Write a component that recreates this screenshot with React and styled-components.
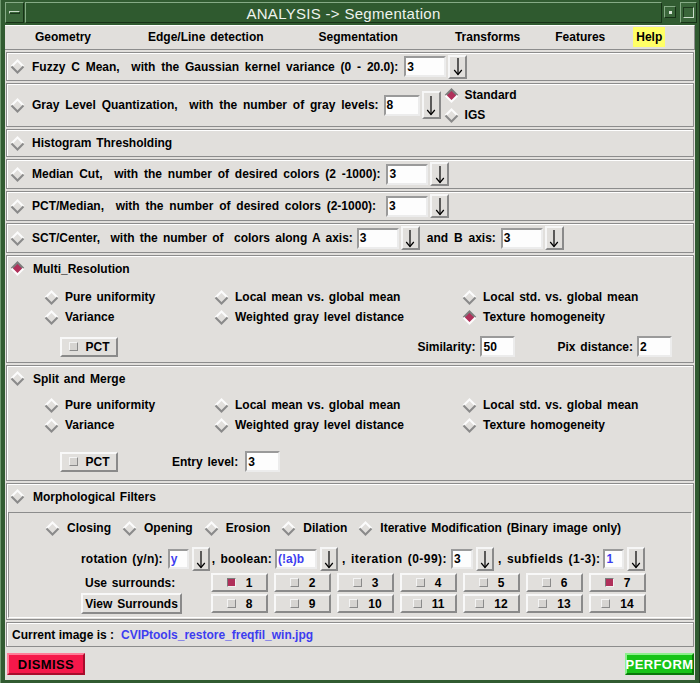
import React from 'react';
import styled, { createGlobalStyle } from 'styled-components';

const BG = '#e1dfdc';
const DARK = '#8c8c8c';
const LIGHT = '#ffffff';
const CRIMSON = '#b0305a';
const BLUE = '#3d3df0';

const GlobalStyle = createGlobalStyle`
  html, body { margin: 0; padding: 0; background: #2c512c; }
  body { font-family: "Liberation Sans", Arial, sans-serif; }
  * { box-sizing: border-box; }
`;

const Win = styled.div`
  width: 700px;
  height: 683px;
  background: #315b31;
  display: flex;
  flex-direction: column;
  padding-bottom: 3px;
  border-left: 1px solid #6f996f;
  border-right: 1px solid #1d381d;
  overflow: hidden;
`;

const TitleBar = styled.div`
  height: 25px;
  flex-shrink: 0;
  display: flex;
  align-items: stretch;
  padding: 2px 2px 2px 4px;
  gap: 1px;
`;

const TitleBtn = styled.div`
  width: ${p => p.$w}px;
  ${p => p.$small ? 'margin: 4px 3px 5px 1px;' : ''}
  border: 1px solid;
  border-color: #86ab86 #173217 #173217 #86ab86;
  background: #3a663a;
  display: flex;
  align-items: center;
  justify-content: center;
`;

const MenuGlyph = styled.div`
  width: 11px;
  height: 3px;
  border: 1px solid;
  border-color: #c9dcc9 #1c381c #1c381c #c9dcc9;
`;

const DotGlyph = styled.div`
  width: 3px;
  height: 3px;
  background: #d9e6d9;
`;

const SquareGlyph = styled.div`
  width: 11px;
  height: 11px;
  border: 1px solid;
  border-color: #1c381c #c9dcc9 #c9dcc9 #1c381c;
`;

const TitleText = styled.div`
  flex: 1;
  display: flex;
  align-items: center;
  justify-content: center;
  color: #eef3ee;
  font-size: 15px;
  letter-spacing: 0.3px;
  font-family: "Liberation Sans", Arial, sans-serif;
  background: #2f5a2f;
  border: 1px solid;
  border-color: #86ab86 #173217 #173217 #86ab86;
  padding-top: 1px;
`;

const Body = styled.div`
  flex: 1;
  margin: 0 4px;
  background: ${BG};
  display: flex;
  flex-direction: column;
  font-weight: bold;
  font-size: 12px;
  word-spacing: 1.5px;
  color: #000;
`;

const MenuBar = styled.div`
  height: 25px;
  flex-shrink: 0;
  display: flex;
  align-items: stretch;
  border-top: 1px solid ${LIGHT};
  border-bottom: 1px solid ${DARK};
  border-right: 1px solid ${DARK};
  padding: 1px 0 2px 0;
`;

const MenuItem = styled.div`
  margin-left: ${p => p.$ml}px;
  padding: 0 3px;
  display: flex;
  align-items: center;
  background: ${p => (p.$hl ? '#ffff66' : 'transparent')};
`;

const Row = styled.div`
  flex-shrink: 0;
  height: ${p => p.$h}px;
  margin: 2px 1px 0;
  border: 1px solid ${DARK};
  box-shadow: inset 1px 1px 0 ${LIGHT};
  display: flex;
  align-items: center;
  padding-left: 3px;
`;

const Section = styled.div`
  flex-shrink: 0;
  height: ${p => p.$h}px;
  margin: 2px 1px 0;
  border: 1px solid ${DARK};
  box-shadow: inset 1px 1px 0 ${LIGHT};
  display: flex;
  flex-direction: column;
`;

const SectionHead = styled.div`
  height: 25px;
  display: flex;
  align-items: center;
  padding-left: 3px;
  flex-shrink: 0;
`;

const Label = styled.span`
  white-space: pre;
  margin-left: ${p => p.$ml ?? 0}px;
  margin-right: ${p => p.$mr ?? 0}px;
  word-spacing: ${p => p.$ws ?? 1.5}px;
  letter-spacing: ${p => p.$ls ?? 0}px;
  color: ${p => (p.$blue ? BLUE : 'inherit')};
`;

const Entry = styled.div`
  width: ${p => p.$w}px;
  height: ${p => p.$hh ?? 21}px;
  margin-left: ${p => p.$ml ?? 0}px;
  background: #fdfdfd;
  border: 2px solid;
  border-color: #9a9a9a #ececec #ececec #9a9a9a;
  display: flex;
  align-items: center;
  padding-left: 1px;
  color: ${p => (p.$blue ? BLUE : '#000')};
  font-weight: bold;
`;

const ArrowBtn = styled.div`
  width: ${p => p.$w ?? 19}px;
  height: ${p => p.$hh ?? 24}px;
  margin-left: ${p => p.$ml ?? 2}px;
  border: 2px solid;
  border-color: #f6f6f6 #8a8a8a #8a8a8a #f6f6f6;
  background: ${BG};
  display: flex;
  align-items: center;
  justify-content: center;
`;

const Arrow = ({ h = 19 }) => (
  <svg width="10" height={h} viewBox={`0 0 10 ${h}`}>
    <line x1="5" y1="1" x2="5" y2={h - 1.5} stroke="#000" strokeWidth="1.2" />
    <polyline points={`1.2,${h - 6} 5,${h - 1.5} 8.8,${h - 6}`} fill="none" stroke="#000" strokeWidth="1.2" />
  </svg>
);

const DiamondSvg = styled.svg`
  flex-shrink: 0;
  display: block;
`;

const Diamond = ({ on }) => (
  <DiamondSvg width="15" height="15" viewBox="0 0 15 15">
    {on && <polygon points="7.5,1.5 13.5,7.5 7.5,13.5 1.5,7.5" fill={CRIMSON} />}
    <polyline points="1.5,7.5 7.5,1.5 13.5,7.5" fill="none" stroke={on ? '#7c7c7c' : '#fcfcfc'} strokeWidth="2" />
    <polyline points="1.5,7.5 7.5,13.5 13.5,7.5" fill="none" stroke={on ? '#fcfcfc' : '#8a8a8a'} strokeWidth="2" />
  </DiamondSvg>
);

const Opt = styled.div`
  display: flex;
  align-items: center;
  gap: ${p => p.$gap ?? 6}px;
  height: ${p => p.$h ?? 20}px;
`;

const RadioOpt = ({ on, children, gap, h }) => (
  <Opt $gap={gap} $h={h}>
    <Diamond on={on} />
    <Label>{children}</Label>
  </Opt>
);

const RadioStack = styled.div`
  display: flex;
  flex-direction: column;
  margin-left: 3px;
`;

const OptGrid = styled.div`
  display: grid;
  grid-template-columns: 170px 248px auto;
  grid-auto-rows: 20px;
  padding-left: 37px;
  margin-top: ${p => p.$mt}px;
`;

const ActionLine = styled.div`
  display: flex;
  align-items: center;
  height: 21px;
  margin-top: ${p => p.$mt}px;
  padding-left: 53px;
  padding-right: 21px;
`;

const Push = styled.div`
  flex: 1;
`;

const Btn = styled.div`
  width: ${p => p.$w}px;
  height: ${p => p.$hh ?? 20}px;
  border: 2px solid;
  border-color: #f8f8f8 #8a8a8a #8a8a8a #f8f8f8;
  background: ${BG};
  display: flex;
  align-items: center;
  justify-content: center;
  gap: ${p => p.$gap ?? 8}px;
  white-space: pre;
`;

const Check = styled.span`
  width: 9px;
  height: 9px;
  display: inline-block;
  border: 1px solid;
  border-color: ${p => (p.$on ? '#7a7a7a #f0f0f0 #f0f0f0 #7a7a7a' : '#f4f4f4 #8a8a8a #8a8a8a #f4f4f4')};
  background: ${p => (p.$on ? CRIMSON : '#d6d4d1')};
`;

const Inner = styled.div`
  margin: 3px 1px 0 1px;
  height: 106px;
  border: 1px solid;
  border-color: ${DARK} ${LIGHT} ${LIGHT} ${DARK};
  display: flex;
  flex-direction: column;
`;

const RadioLine = styled.div`
  display: flex;
  align-items: center;
  gap: 11px;
  height: 20px;
  margin-top: 5px;
  padding-left: 36px;
`;

const ParamLine = styled.div`
  display: flex;
  align-items: center;
  height: 24px;
  margin-top: 9px;
  padding-left: 72px;
`;

const SurroundGrid = styled.div`
  display: grid;
  grid-template-columns: 124px repeat(7, 57px);
  grid-auto-rows: 19px;
  column-gap: 6px;
  row-gap: 2px;
  margin-top: 2px;
  padding-left: 72px;
  align-items: center;
`;

const GridLabel = styled.span`
  padding-left: 4px;
`;

const BottomBar = styled.div`
  flex: 1;
  display: flex;
  align-items: flex-start;
  justify-content: space-between;
  padding: 6px 1px 0 2px;
`;

const BigBtn = styled.div`
  width: ${p => p.$w}px;
  height: 22px;
  background: ${p => p.$bg};
  color: ${p => p.$fg};
  border: 2px solid;
  border-color: ${p => p.$hi} ${p => p.$lo} ${p => p.$lo} ${p => p.$hi};
  display: flex;
  align-items: center;
  justify-content: center;
  font-size: 13px;
  letter-spacing: 0.4px;
`;

const surr1 = [1, 2, 3, 4, 5, 6, 7];
const surr2 = [8, 9, 10, 11, 12, 13, 14];

export default function App() {
  return (
    <>
      <GlobalStyle />
      <Win>
        <TitleBar>
          <TitleBtn $w={19}><MenuGlyph /></TitleBtn>
          <TitleText>ANALYSIS -&gt; Segmentation</TitleText>
          <TitleBtn $w={12} $small><DotGlyph /></TitleBtn>
          <TitleBtn $w={17}><SquareGlyph /></TitleBtn>
        </TitleBar>
        <Body>
          <MenuBar>
            <MenuItem $ml={27}>Geometry</MenuItem>
            <MenuItem $ml={51}>Edge/Line detection</MenuItem>
            <MenuItem $ml={49}>Segmentation</MenuItem>
            <MenuItem $ml={51}>Transforms</MenuItem>
            <MenuItem $ml={29}>Features</MenuItem>
            <MenuItem $ml={25} $hl>Help</MenuItem>
          </MenuBar>

          <Row $h={29}>
            <Diamond />
            <Label $ml={7} $mr={6} $ws={2.5}>Fuzzy C Mean,  with the Gaussian kernel variance (0 - 20.0):</Label>
            <Entry $w={42}>3</Entry>
            <ArrowBtn><Arrow /></ArrowBtn>
          </Row>

          <Row $h={44}>
            <Diamond />
            <Label $ml={7} $mr={5} $ws={2.5}>Gray Level Quantization,  with the number of gray levels:</Label>
            <Entry $w={36}>8</Entry>
            <ArrowBtn $hh={28}><Arrow h={21} /></ArrowBtn>
            <RadioStack>
              <RadioOpt on>Standard</RadioOpt>
              <RadioOpt>IGS</RadioOpt>
            </RadioStack>
          </Row>

          <Row $h={28}>
            <Diamond />
            <Label $ml={7}>Histogram Thresholding</Label>
          </Row>

          <Row $h={30}>
            <Diamond />
            <Label $ml={7} $mr={6} $ws={2.5}>Median Cut,  with the number of desired colors (2 -1000):</Label>
            <Entry $w={42}>3</Entry>
            <ArrowBtn><Arrow /></ArrowBtn>
          </Row>

          <Row $h={30}>
            <Diamond />
            <Label $ml={7} $mr={10} $ws={2.5}>PCT/Median,  with the number of desired colors (2-1000):</Label>
            <Entry $w={42}>3</Entry>
            <ArrowBtn><Arrow /></ArrowBtn>
          </Row>

          <Row $h={30}>
            <Diamond />
            <Label $ml={7} $mr={4} $ws={1.9}>SCT/Center,  with the number of  colors along A axis:</Label>
            <Entry $w={42}>3</Entry>
            <ArrowBtn><Arrow /></ArrowBtn>
            <Label $ml={7} $mr={5} $ws={2.5}>and B axis:</Label>
            <Entry $w={42}>3</Entry>
            <ArrowBtn><Arrow /></ArrowBtn>
          </Row>

          <Section $h={108}>
            <SectionHead>
              <Diamond on />
              <Label $ml={8}>Multi_Resolution</Label>
            </SectionHead>
            <OptGrid $mt={6}>
              <RadioOpt>Pure uniformity</RadioOpt>
              <RadioOpt>Local mean vs. global mean</RadioOpt>
              <RadioOpt>Local std. vs. global mean</RadioOpt>
              <RadioOpt>Variance</RadioOpt>
              <RadioOpt>Weighted gray level distance</RadioOpt>
              <RadioOpt on>Texture homogeneity</RadioOpt>
            </OptGrid>
            <ActionLine $mt={9}>
              <Btn $w={58}><Check />PCT</Btn>
              <Push />
              <Label $mr={5}>Similarity:</Label>
              <Entry $w={35}>50</Entry>
              <Label $ml={42} $mr={4}>Pix distance:</Label>
              <Entry $w={35}>2</Entry>
            </ActionLine>
          </Section>

          <Section $h={116}>
            <SectionHead>
              <Diamond />
              <Label $ml={8}>Split and Merge</Label>
            </SectionHead>
            <OptGrid $mt={4}>
              <RadioOpt>Pure uniformity</RadioOpt>
              <RadioOpt>Local mean vs. global mean</RadioOpt>
              <RadioOpt>Local std. vs. global mean</RadioOpt>
              <RadioOpt>Variance</RadioOpt>
              <RadioOpt>Weighted gray level distance</RadioOpt>
              <RadioOpt>Texture homogeneity</RadioOpt>
            </OptGrid>
            <ActionLine $mt={16}>
              <Btn $w={58}><Check />PCT</Btn>
              <Label $ml={54} $mr={7}>Entry level:</Label>
              <Entry $w={35}>3</Entry>
            </ActionLine>
          </Section>

          <Section $h={137}>
            <SectionHead>
              <Diamond />
              <Label $ml={8}>Morphological Filters</Label>
            </SectionHead>
            <Inner>
              <RadioLine>
                <RadioOpt gap={7}>Closing</RadioOpt>
                <RadioOpt gap={7}>Opening</RadioOpt>
                <RadioOpt gap={7}>Erosion</RadioOpt>
                <RadioOpt gap={7}>Dilation</RadioOpt>
                <RadioOpt gap={7}>Iterative Modification (Binary image only)</RadioOpt>
              </RadioLine>
              <ParamLine>
                <Label $mr={5} $ls={0.2}>rotation (y/n):</Label>
                <Entry $w={21} $hh={20} $blue>y</Entry>
                <ArrowBtn $w={18} $ml={3}><Arrow /></ArrowBtn>
                <Label $ml={2} $mr={3} $ls={0.2}>, boolean:</Label>
                <Entry $w={42} $hh={20} $blue>(!a)b</Entry>
                <ArrowBtn $w={18} $ml={3}><Arrow /></ArrowBtn>
                <Label $ml={4} $mr={4} $ls={0.45}>, iteration (0-99):</Label>
                <Entry $w={22} $hh={20}>3</Entry>
                <ArrowBtn $w={18} $ml={3}><Arrow /></ArrowBtn>
                <Label $ml={4} $mr={3} $ls={0.42}>, subfields (1-3):</Label>
                <Entry $w={21} $hh={20} $blue>1</Entry>
                <ArrowBtn $w={18} $ml={3}><Arrow /></ArrowBtn>
              </ParamLine>
              <SurroundGrid>
                <GridLabel>Use surrounds:</GridLabel>
                {surr1.map(n => (
                  <Btn key={n} $w={57} $hh={19} $gap={10}>
                    <Check $on={n === 1 || n === 7} />{String(n)}
                  </Btn>
                ))}
                <Btn $w={101} $hh={21} $gap={0}>View Surrounds</Btn>
                {surr2.map(n => (
                  <Btn key={n} $w={57} $hh={19} $gap={10}>
                    <Check />{String(n)}
                  </Btn>
                ))}
              </SurroundGrid>
            </Inner>
          </Section>

          <Row $h={25}>
            <Label $ml={2} $mr={7} $ws={0}>Current image is :</Label>
            <Label $blue>CVIPtools_restore_freqfil_win.jpg</Label>
          </Row>

          <BottomBar>
            <BigBtn $w={78} $bg="#f5184a" $fg="#000" $hi="#ff7c97" $lo="#a80c2c">DISMISS</BigBtn>
            <BigBtn $w={69} $bg="#18c418" $fg="#fff" $hi="#8cf08c" $lo="#0a780a">PERFORM</BigBtn>
          </BottomBar>
        </Body>
      </Win>
    </>
  );
}
